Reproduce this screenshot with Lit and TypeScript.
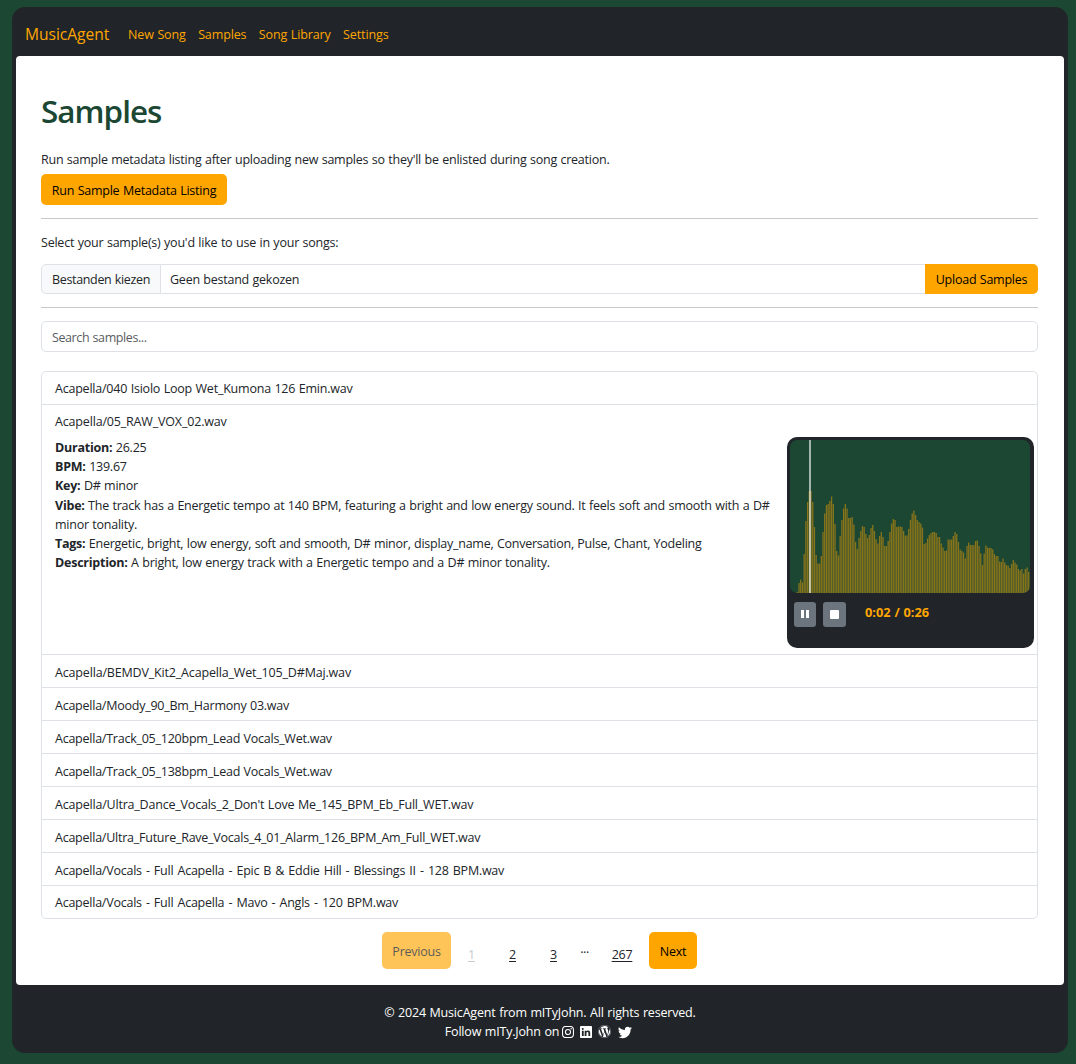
import { LitElement, html, css, svg } from "lit";
import { customElement } from "lit/decorators.js";

/* File name and the class that sets its tracking. */
const ROWS_AFTER: [string, string][] = [
  ["Acapella/BEMDV_Kit2_Acapella_Wet_105_D#Maj.wav", "loose"],
  ["Acapella/Moody_90_Bm_Harmony 03.wav", ""],
  ["Acapella/Track_05_120bpm_Lead Vocals_Wet.wav", ""],
  ["Acapella/Track_05_138bpm_Lead Vocals_Wet.wav", ""],
  ["Acapella/Ultra_Dance_Vocals_2_Don't Love Me_145_BPM_Eb_Full_WET.wav", "medium"],
  ["Acapella/Ultra_Future_Rave_Vocals_4_01_Alarm_126_BPM_Am_Full_WET.wav", ""],
  ["Acapella/Vocals - Full Acapella - Epic B & Eddie Hill - Blessings II - 128 BPM.wav", "dashed"],
  ["Acapella/Vocals - Full Acapella - Mavo - Angls - 120 BPM.wav", "dashed"],
];

/* Bar heights of the spectrum, in pixels, left to right. */
const BARS = [
  0, 0, 0, 0, 1, 10, 13.5, 10.5, 39, 72, 91, 102, 102, 91, 66, 38, 29.5, 29.5, 37, 61, 79.5, 88, 89, 92, 96.5, 89,
  69, 42, 37.5, 57, 73, 84.5, 89, 84.5, 75, 75, 76, 68.5, 51, 44, 55, 62, 67, 66, 59, 55, 58, 65, 68, 62, 54,
  49.5, 57, 61, 56, 47, 47, 52, 61, 69.5, 74, 73, 66, 66.5, 66.5, 66, 62, 57.5, 57.5, 64, 73, 79.5, 82.5, 78,
  73, 71, 69.5, 65.5, 49, 50, 54.5, 58, 60, 61, 61, 60, 56, 56, 49.5, 45.5, 42, 42.5, 53.5, 53.5, 53.5, 57, 61,
  59, 51, 43.5, 42, 40.5, 34.5, 47, 50.5, 48, 48, 48, 52, 52.5, 47, 39.5, 28, 39.5, 47.5, 45.5, 45, 45, 43.5,
  39, 37, 37, 31.5, 31, 34.5, 30.5, 28, 27.5, 25, 29, 33, 30.5, 28.5, 24, 22.5, 24, 19.5, 24, 25.5, 21,
];

@customElement("app-root")
export class AppRoot extends LitElement {
  static styles = css`
    :host {
      display: block;
      box-sizing: border-box;
      height: 1064px;
      padding: 7px 8px 11px 12px;
      background: #1b4733;
      color: #212529;
      font: 12.5px/19.2px "Open Sans", "Noto Sans", sans-serif;
      letter-spacing: -0.24px;
      word-spacing: 0.5px;
    }
    *, *::before { box-sizing: border-box; }
    .shell {
      display: flex;
      flex-direction: column;
      height: 1046px;
      padding: 0 4px;
      background: #212529;
      border-radius: 13px;
    }
    nav { display: flex; align-items: center; height: 49px; padding: 7px 9px 0; color: #ffa500; }
    .brand { font-size: 15.6px; width: 103px; letter-spacing: -0.04px; }
    .links { display: flex; gap: 12.4px; letter-spacing: -0.12px; }
    main { height: 929px; padding: 34px 26px 0 25px; background: #fff; border-radius: 4px; }
    h1 { margin: 0 0 18px; font-size: 31.4px; line-height: 42px; font-weight: 600; color: #1b4733; letter-spacing: -0.95px; }
    p { margin: 0; }
    .btn {
      display: flex; align-items: center; justify-content: center;
      border: 0; border-radius: 5px; background: #ffa500; color: #000;
      font: inherit; letter-spacing: inherit; word-spacing: inherit; padding: 1px 0 0;
    }
    .run { width: 186px; height: 31px; margin-top: 5px; }
    .line { height: 1px; background: #c7c8c9; margin: 13px 0; }
    .select { margin-top: 14px; letter-spacing: -0.22px; }
    .upload { display: flex; height: 30px; margin-top: 12px; }
    .choose {
      width: 120px; padding: 5px 0 0 10px; background: #f8f9fa; letter-spacing: -0.34px;
      border: 1px solid #dee2e6; border-radius: 5px 0 0 5px;
    }
    .chosen { flex: 1; padding: 5px 0 0 9px; border: 1px solid #dee2e6; border-width: 1px 0; }
    .up { width: 113px; border-radius: 0 5px 5px 0; }
    .search {
      height: 31px; padding: 6px 10px; border: 1px solid #dee2e6; border-radius: 5px;
      color: #595c5f; letter-spacing: -0.4px;
    }
    .list { margin-top: 19px; border: 1px solid #dee2e6; border-radius: 5px; height: 548px; }
    .row { height: 33px; padding: 8px 13px 0; border-bottom: 1px solid #dee2e6; }
    .row.top { padding-top: 7px; letter-spacing: -0.22px; }
    .row:last-child { border-bottom: 0; padding-top: 7px; }
    .loose { letter-spacing: -0.17px; }
    .medium { letter-spacing: -0.2px; }
    .dashed { word-spacing: 1.15px; }
    .row.open { height: 250px; padding-top: 7px; padding-right: 3px; }
    .detail { display: flex; justify-content: space-between; }
    .meta { width: 722px; padding-top: 6.4px; }
    .tags { letter-spacing: -0.26px; }
    b { font-weight: 700; }
    .player { width: 247px; height: 211px; margin-top: 5px; padding: 3px; background: #212529; border-radius: 10px; }
    .wave { display: block; width: 240px; height: 153px; border-radius: 7px; background: #1b4733; }
    .controls { display: flex; align-items: flex-start; padding: 9px 4px 0; }
    .ctl {
      display: flex; align-items: center; justify-content: center;
      width: 22px; height: 25px; margin-right: 7px; border-radius: 3px; background: #6c757d;
    }
    .ctl + .ctl { width: 23px; margin-right: 19px; }
    .time { padding-top: 1px; color: #ffa500; font-weight: 700; font-size: 12.8px; letter-spacing: 0; }
    .pages { display: flex; margin: 13px 0 0 341px; height: 37px; }
    .pages .btn { height: 37px; }
    .prev { width: 69px; opacity: 0.65; }
    .next { width: 48px; }
    .page { text-align: center; text-decoration: underline; text-underline-offset: 2px; padding-top: 13px; }
    .narrow { width: 41px; }
    .dots { width: 21px; text-align: center; padding-top: 7px; letter-spacing: -0.5px; }
    .last { width: 54px; }
    .off { color: #c8cacc; }
    footer { flex: 1; padding-top: 18px; text-align: center; color: #fff; letter-spacing: -0.18px; }
    .follow { display: flex; justify-content: center; align-items: center; padding-right: 3px; }
    .follow svg { width: 12px; height: 12px; margin-left: 3px; fill: #fff; }
    .follow svg + svg { margin-left: 6px; }
    .follow svg:last-child { width: 14px; height: 14px; margin-left: 7px; }
    .follow .wp { width: 13px; height: 13px; }
  `;

  private wave() {
    const pitch = 240 / 140;
    return html`<svg class="wave" viewBox="0 0 240 153">
      ${BARS.map((h, i) =>
        h ? svg`<rect x=${(i * pitch - 0.2).toFixed(2)} y=${153 - h} width="1.3" height=${h} fill="#ffa500" fill-opacity="0.48"></rect>` : "",
      )}
      <rect x="19" y="0" width="2" height="153" fill="#fff" fill-opacity="0.6"></rect>
    </svg>`;
  }

  render() {
    return html`
      <div class="shell">
        <nav>
          <span class="brand">MusicAgent</span>
          <div class="links"><span>New Song</span><span>Samples</span><span>Song Library</span><span>Settings</span></div>
        </nav>
        <main>
          <h1>Samples</h1>
          <p>Run sample metadata listing after uploading new samples so they'll be enlisted during song creation.</p>
          <button class="btn run">Run Sample Metadata Listing</button>
          <div class="line"></div>
          <p class="select">Select your sample(s) you'd like to use in your songs:</p>
          <div class="upload">
            <div class="choose">Bestanden kiezen</div>
            <div class="chosen">Geen bestand gekozen</div>
            <button class="btn up">Upload Samples</button>
          </div>
          <div class="line"></div>
          <div class="search">Search samples...</div>
          <div class="list">
            <div class="row top">Acapella/040 Isiolo Loop Wet_Kumona 126 Emin.wav</div>
            <div class="row open">
              <div class="loose">Acapella/05_RAW_VOX_02.wav</div>
              <div class="detail">
                <div class="meta">
                  <div><b>Duration:</b> 26.25</div>
                  <div><b>BPM:</b> 139.67</div>
                  <div><b>Key:</b> D# minor</div>
                  <div><b>Vibe:</b> The track has a Energetic tempo at 140 BPM, featuring a bright and low energy sound. It feels soft and smooth with a D# minor tonality.</div>
                  <div class="tags"><b>Tags:</b> Energetic, bright, low energy, soft and smooth, D# minor, display_name, Conversation, Pulse, Chant, Yodeling</div>
                  <div><b>Description:</b> A bright, low energy track with a Energetic tempo and a D# minor tonality.</div>
                </div>
                <div class="player">
                  ${this.wave()}
                  <div class="controls">
                    <span class="ctl"><svg width="8" height="8"><path d="M0 0h3v8H0zM5 0h3v8H5z" fill="#fff" /></svg></span>
                    <span class="ctl"><svg width="9" height="9"><rect width="9" height="9" rx="1" fill="#fff" /></svg></span>
                    <span class="time">0:02 / 0:26</span>
                  </div>
                </div>
              </div>
            </div>
            ${ROWS_AFTER.map(([name, tracking]) => html`<div class="row ${tracking}">${name}</div>`)}
          </div>
          <div class="pages">
            <button class="btn prev">Previous</button>
            <span class="page narrow off">1</span>
            <span class="page narrow">2</span>
            <span class="page narrow">3</span>
            <span class="dots">...</span>
            <span class="page last">267</span>
            <button class="btn next">Next</button>
          </div>
        </main>
        <footer>
          <div>© 2024 MusicAgent from mITyJohn. All rights reserved.</div>
          <div class="follow">
            Follow mITy.John on
            <svg viewBox="0 0 16 16"><path d="M8 0C5.829 0 5.556.01 4.703.048 3.85.088 3.269.222 2.76.42a3.9 3.9 0 0 0-1.417.923A3.9 3.9 0 0 0 .42 2.76C.222 3.268.087 3.85.048 4.7.01 5.555 0 5.827 0 8.001c0 2.172.01 2.444.048 3.297.04.852.174 1.433.372 1.942.205.526.478.972.923 1.417.444.445.89.719 1.416.923.51.198 1.09.333 1.942.372C5.555 15.99 5.827 16 8 16s2.444-.01 3.298-.048c.851-.04 1.434-.174 1.943-.372a3.9 3.9 0 0 0 1.416-.923c.445-.445.718-.891.923-1.417.197-.509.332-1.09.372-1.942C15.99 10.445 16 10.173 16 8s-.01-2.445-.048-3.299c-.04-.851-.175-1.433-.372-1.941a3.9 3.9 0 0 0-.923-1.417A3.9 3.9 0 0 0 13.24.42c-.51-.198-1.092-.333-1.943-.372C10.443.01 10.172 0 7.998 0zm-.717 1.442h.718c2.136 0 2.389.007 3.232.046.78.035 1.204.166 1.486.275.373.145.64.319.92.599s.453.546.598.92c.11.281.24.705.275 1.485.039.843.047 1.096.047 3.231s-.008 2.389-.047 3.232c-.035.78-.166 1.203-.275 1.485a2.5 2.5 0 0 1-.599.919c-.28.28-.546.453-.92.598-.28.11-.704.24-1.485.276-.843.038-1.096.047-3.232.047s-2.39-.009-3.233-.047c-.78-.036-1.203-.166-1.485-.276a2.5 2.5 0 0 1-.92-.598 2.5 2.5 0 0 1-.6-.92c-.109-.281-.24-.705-.275-1.485-.038-.843-.046-1.096-.046-3.233s.008-2.388.046-3.231c.036-.78.166-1.204.276-1.486.145-.373.319-.64.599-.92s.546-.453.92-.598c.282-.11.705-.24 1.485-.276.738-.034 1.024-.044 2.515-.045zm4.988 1.328a.96.96 0 1 0 0 1.92.96.96 0 0 0 0-1.92m-4.27 1.122a4.109 4.109 0 1 0 0 8.217 4.109 4.109 0 0 0 0-8.217m0 1.441a2.667 2.667 0 1 1 0 5.334 2.667 2.667 0 0 1 0-5.334" /></svg>
            <svg viewBox="0 0 16 16"><path d="M0 1.146C0 .513.526 0 1.175 0h13.65C15.474 0 16 .513 16 1.146v13.708c0 .633-.526 1.146-1.175 1.146H1.175C.526 16 0 15.487 0 14.854zm4.943 12.248V6.169H2.542v7.225zm-1.2-8.212c.837 0 1.358-.554 1.358-1.248-.015-.709-.52-1.248-1.342-1.248S2.4 3.226 2.4 3.934c0 .694.521 1.248 1.327 1.248zm4.908 8.212V9.359c0-.216.016-.432.08-.586.173-.431.568-.878 1.232-.878.869 0 1.216.662 1.216 1.634v3.865h2.401V9.25c0-2.22-1.184-3.252-2.764-3.252-1.274 0-1.845.7-2.165 1.193v.025h-.016l.016-.025V6.169h-2.4c.03.678 0 7.225 0 7.225z" /></svg>
            <svg class="wp" viewBox="0 0 16 16"><path d="M12.633 7.653c0-.848-.305-1.435-.566-1.892l-.08-.13c-.317-.51-.594-.958-.594-1.48 0-.63.478-1.218 1.152-1.218q.03 0 .058.003l.031.003A6.84 6.84 0 0 0 8 1.137 6.86 6.86 0 0 0 2.266 4.23c.16.005.313.009.442.009.717 0 1.828-.087 1.828-.087.37-.022.414.521.044.565 0 0-.371.044-.785.065l2.5 7.434 1.5-4.506-1.07-2.929c-.369-.022-.719-.065-.719-.065-.37-.022-.326-.588.043-.566 0 0 1.134.087 1.808.087.718 0 1.83-.087 1.83-.087.37-.022.413.522.043.566 0 0-.372.043-.785.065l2.48 7.377.684-2.287.054-.173c.27-.86.469-1.495.469-2.046zM1.137 8a6.86 6.86 0 0 0 3.868 6.176L1.73 5.206A6.8 6.8 0 0 0 1.137 8m6.983.6-2.06 5.983a6.85 6.85 0 0 0 4.218-.11 1 1 0 0 1-.049-.094zM14.02 4.706q.044.328.045.706c0 .696-.13 1.479-.522 2.458l-2.096 6.06A6.86 6.86 0 0 0 14.02 4.706M8 0a8 8 0 1 0 0 16A8 8 0 0 0 8 0m0 .367a7.633 7.633 0 1 1 0 15.266A7.633 7.633 0 0 1 8 .367" /></svg>
            <svg viewBox="0 0 16 16"><path d="M5.026 15c6.038 0 9.341-5.003 9.341-9.334q.002-.211-.006-.422A6.7 6.7 0 0 0 16 3.542a6.7 6.7 0 0 1-1.889.518 3.3 3.3 0 0 0 1.447-1.817 6.5 6.5 0 0 1-2.087.793A3.286 3.286 0 0 0 7.875 6.03a9.32 9.32 0 0 1-6.767-3.429 3.29 3.29 0 0 0 1.018 4.382A3.3 3.3 0 0 1 .64 6.575v.045a3.29 3.29 0 0 0 2.632 3.218 3.2 3.2 0 0 1-.865.115 3 3 0 0 1-.614-.057 3.28 3.28 0 0 0 3.067 2.277A6.6 6.6 0 0 1 .78 13.58a6 6 0 0 1-.78-.045A9.34 9.34 0 0 0 5.026 15" /></svg>
          </div>
        </footer>
      </div>
    `;
  }
}
